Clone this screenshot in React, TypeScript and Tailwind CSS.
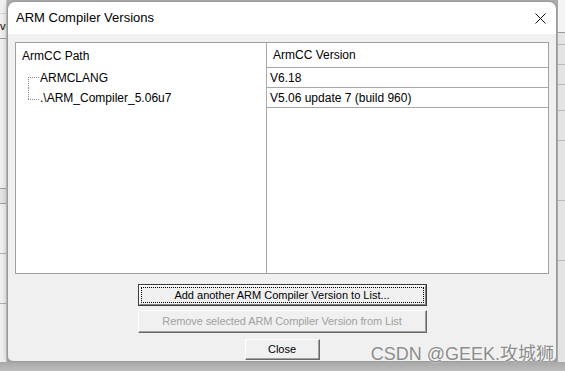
import React from 'react';

const uiFont = { fontFamily: '"Segoe UI", "Liberation Sans", Arial, sans-serif' };
const btnFont = { fontFamily: 'Tahoma, "Liberation Sans", Arial, sans-serif' };

const TreeLink = ({ last }: { last: boolean }) => (
  <svg width="12" height="20" className="shrink-0 ml-[12px]">
    {last ? (
      <>
        <line x1="0.5" y1="0" x2="0.5" y2="11" stroke="#8a8a8a" strokeDasharray="1 1" />
        <line x1="0" y1="11.5" x2="12" y2="11.5" stroke="#8a8a8a" strokeDasharray="1 1" />
      </>
    ) : (
      <>
        <line x1="0.5" y1="9" x2="0.5" y2="20" stroke="#8a8a8a" strokeDasharray="1 1" />
        <line x1="0" y1="9.5" x2="12" y2="9.5" stroke="#8a8a8a" strokeDasharray="1 1" />
      </>
    )}
  </svg>
);

const rows = [
  { path: 'ARMCLANG', version: 'V6.18' },
  { path: '.\\ARM_Compiler_5.06u7', version: 'V5.06 update 7 (build 960)' },
];

export default function App() {
  return (
    <div className="relative w-[565px] h-[371px] overflow-hidden flex flex-col bg-[#b0b0b0]" style={uiFont}>
      <div className="flex h-[362px] shrink-0">
        {/* window behind, left edge */}
        <div className="w-[7px] flex flex-col bg-[#f0f0f0] border-r border-[#c8c8c8] overflow-hidden">
          <div className="h-[14px] border-b border-[#d6d6d6]" />
          <div className="h-[24px] text-[11px] leading-[24px] whitespace-nowrap">ve</div>
          <div className="h-[150px] border-t border-[#a0a0a0]" />
          <div className="h-[16px] border-t border-b border-[#a0a0a0] bg-[#e4e4e4]" />
          <div className="h-[50px] border-b border-[#b0b0b0]" />
          <div className="h-[50px] border-b border-[#b0b0b0]" />
          <div className="flex-1" />
        </div>

        {/* dialog */}
        <div className="pt-[1px] w-[550px] shrink-0">
          <div className="h-full flex flex-col border border-[#9a9a9a] rounded-t-[8px] rounded-b-[6px] overflow-hidden shadow-[0_2px_6px_rgba(0,0,0,0.25)]">
            <div className="h-[32px] shrink-0 bg-white flex items-center justify-between pl-[8px] pr-[10px]">
              <span className="text-[13px] text-black">ARM Compiler Versions</span>
              <svg width="11" height="11" viewBox="0 0 11 11">
                <path d="M0.5 0.5 L10.5 10.5 M10.5 0.5 L0.5 10.5" stroke="#111" strokeWidth="1" />
              </svg>
            </div>

            <div className="flex-1 bg-[#f0f0f0] px-[7px] pt-[8px] flex flex-col items-center">
              {/* list view */}
              <div className="w-full h-[232px] bg-white border border-[#a0a0a0] flex text-[12px] text-black">
                <div className="w-[251px] border-r border-[#a9a9a9] flex flex-col">
                  <div className="h-[25px] flex items-center pl-[6px]">ArmCC Path</div>
                  {rows.map((r, i) => (
                    <div key={r.path} className="h-[20px] flex items-center">
                      <TreeLink last={i === rows.length - 1} />
                      <span>{r.path}</span>
                    </div>
                  ))}
                </div>
                <div className="flex-1 flex flex-col">
                  <div className="h-[25px] flex items-center pl-[6px] border-b border-[#a9a9a9]">ArmCC Version</div>
                  {rows.map((r) => (
                    <div key={r.version} className="h-[20px] flex items-center pl-[3px] border-b border-[#a9a9a9]">
                      {r.version}
                    </div>
                  ))}
                </div>
              </div>

              {/* buttons */}
              <div className="mt-[10px] w-[289px] h-[22px] border border-[#3c3c3c] bg-[#f0f0f0]" style={btnFont}>
                <div className="h-full border border-t-white border-l-white border-r-[#808080] border-b-[#808080] p-[1px]">
                  <div className="h-full border border-dotted border-black flex items-center justify-center text-[11px] text-black">
                    Add another ARM Compiler Version to List...
                  </div>
                </div>
              </div>
              <div
                className="mt-[4px] w-[289px] h-[23px] border border-t-white border-l-white border-r-[#696969] border-b-[#696969] shadow-[inset_-1px_-1px_0_#a0a0a0] flex items-center justify-center text-[11px] tracking-[-0.1px] text-[#a0a0a0]"
                style={btnFont}
              >
                Remove selected ARM Compiler Version from List
              </div>
              <div
                className="mt-[6px] w-[75px] h-[21px] border border-t-white border-l-white border-r-[#696969] border-b-[#696969] shadow-[inset_-1px_-1px_0_#a0a0a0] flex items-center justify-center text-[11px] text-black"
                style={btnFont}
              >
                Close
              </div>
            </div>
          </div>
        </div>

        {/* window behind, right edge */}
        <div className="flex-1 flex flex-col bg-[#e4e4e4] border-l border-[#a8a8a8]">
          <div className="h-[32px] bg-[#f4f4f4]" />
          <div className="h-[12px] border-t border-[#9a9a9a]" />
          <div className="h-[20px] border-t border-[#b8b8b8]" />
          <div className="h-[20px] border-t border-[#b8b8b8]" />
          <div className="h-[26px] border-t border-[#b8b8b8]" />
          <div className="h-[30px] border-t border-[#b8b8b8]" />
          <div className="h-[60px] border-t border-[#b8b8b8]" />
          <div className="h-[60px] border-t border-[#b8b8b8]" />
          <div className="flex-1 border-t border-[#b8b8b8]" />
        </div>
      </div>
      <div className="flex-1 bg-gradient-to-b from-[#a8a8a8] to-[#bdbdbd]" />

      {/* watermark */}
      <div
        className="absolute right-[11px] bottom-[8px] text-[18px] leading-none text-[#8c8c8c] whitespace-nowrap [text-shadow:0_0_2px_#ffffff]"
        style={{ fontFamily: '"Liberation Sans", "Noto Sans CJK SC", sans-serif' }}
      >
        CSDN @GEEK.攻城狮
      </div>
    </div>
  );
}
